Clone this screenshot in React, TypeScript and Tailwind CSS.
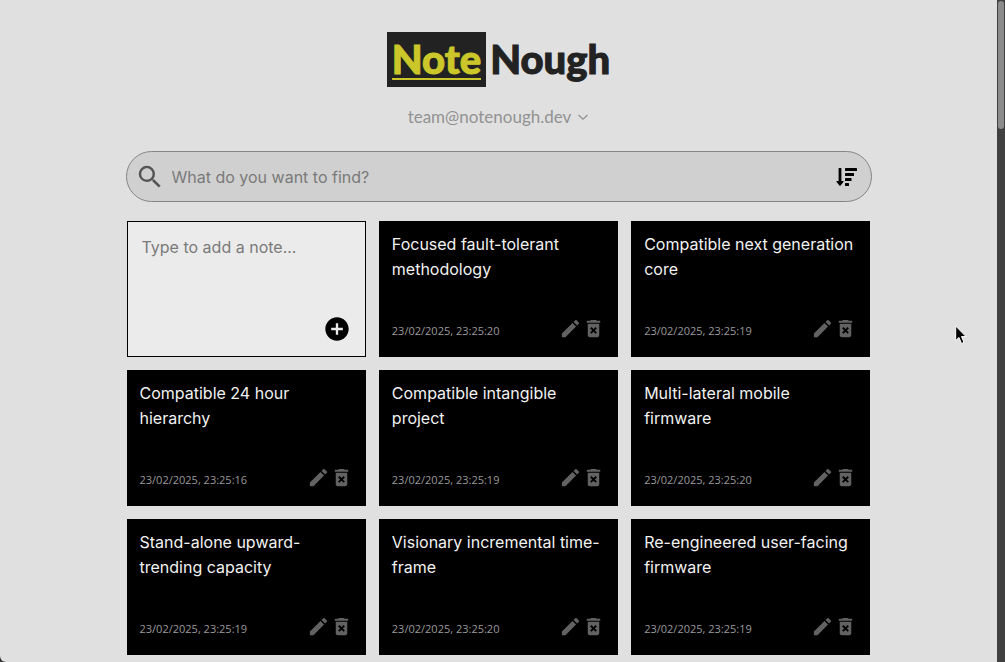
import { MdAddCircle, MdDeleteForever, MdEdit, MdSearch } from "react-icons/md";

type Note = { title: string; date: string };

const notes: Note[] = [
  { title: "Focused fault-tolerant methodology", date: "23/02/2025, 23:25:20" },
  { title: "Compatible next generation core", date: "23/02/2025, 23:25:19" },
  { title: "Compatible 24 hour hierarchy", date: "23/02/2025, 23:25:16" },
  { title: "Compatible intangible project", date: "23/02/2025, 23:25:19" },
  { title: "Multi-lateral mobile firmware", date: "23/02/2025, 23:25:20" },
  { title: "Stand-alone upward-trending capacity", date: "23/02/2025, 23:25:19" },
  { title: "Visionary incremental time-frame", date: "23/02/2025, 23:25:20" },
  { title: "Re-engineered user-facing firmware", date: "23/02/2025, 23:25:19" },
];

function SortIcon() {
  return (
    <svg width="22" height="20" viewBox="0 0 22 20" fill="currentColor" aria-hidden="true">
      <path d="M2.6 1.500Q2.600 1 3.100 1H4.900Q5.400 1 5.400 1.500V14H7.200Q8 14.200 7.400 15L4.600 18.500Q4 19.100 3.400 18.500L.6 15Q0 14.200 .8 14H2.600Z" />
      <rect x="9" y="1" width="12" height="3" rx=".6" />
      <rect x="9" y="6" width="9" height="3" rx=".6" />
      <rect x="9" y="11" width="6.500" height="3" rx=".6" />
      <rect x="9" y="16" width="4" height="3" rx=".6" />
    </svg>
  );
}

function NoteCard({ title, date }: Note) {
  return (
    <article className="flex h-[136px] flex-col justify-between bg-black pt-[11px] pr-[13px] pb-[17px] pl-[13px]">
      <h2 className="text-base leading-[25px] text-[#f2f2f2]">{title}</h2>
      <footer className="flex items-end justify-between">
        <time className="font-['Open_Sans',sans-serif] text-[11px] leading-[19px] text-[#999]">{date}</time>
        <div className="flex text-[#626262]">
          <button aria-label="Edit note"><MdEdit size={23} /></button>
          <button aria-label="Delete note"><MdDeleteForever size={23} /></button>
        </div>
      </footer>
    </article>
  );
}

export default function App() {
  return (
    <div className="flex min-h-screen bg-[#333] font-[Inter,sans-serif]">
      <main className="min-w-0 flex-1 rounded-bl-md bg-[#e0e0e0] pt-8">
        <div className="mx-auto w-3/4 max-w-[746px]">
          <header className="flex flex-col items-center">
            <h1 className="flex h-[55px] items-stretch font-[Lato,sans-serif] text-[40px] leading-[55px] font-black text-[#222] [-webkit-text-stroke:1px_currentColor]">
              <span className="bg-[#222] px-[5px] text-[#cbc72b]">
                <span className="block h-[48px] border-b-2 border-[#cbc72b]">Note</span>
              </span>
              <span className="pl-1">Nough</span>
            </h1>
            <button className="mt-[18px] flex h-6 items-center gap-1.5 font-[Lato,sans-serif] text-[17px] leading-6 text-[#929292]">
              team@notenough.dev
              <svg width="12" height="12" viewBox="0 0 12 12" fill="none" stroke="currentColor" strokeWidth="1.300" aria-hidden="true">
                <path d="M1.500 4L6 8.200L10.500 4" />
              </svg>
            </button>
          </header>

          <form className="mt-[22px] flex h-[51px] items-center rounded-full border border-[#858585] bg-[#d0d0d0] pr-[13px] pl-2">
            <MdSearch size={30} className="shrink-0 text-[#555]" />
            <input
              type="search"
              aria-label="Search notes"
              placeholder="What do you want to find?"
              className="ml-[7px] min-w-0 flex-1 bg-transparent text-base text-[#333] outline-none placeholder:text-[#7a7a7a]"
            />
            <button type="button" aria-label="Sort notes"><SortIcon /></button>
          </form>

          <section className="mt-[19px] grid grid-cols-3 gap-[13px] px-px">
            <form className="flex h-[136px] flex-col border border-black bg-[#ebebeb] pt-[13px] pr-3.5 pb-[13px] pl-3.5">
              <textarea
                aria-label="New note"
                placeholder="Type to add a note..."
                className="min-h-0 flex-1 resize-none bg-transparent text-base leading-[25px] text-[#222] outline-none placeholder:text-[#7a7a7a]"
              />
              <button type="button" aria-label="Add note" className="self-end">
                <MdAddCircle size={28} />
              </button>
            </form>
            {notes.map((note) => (
              <NoteCard key={note.title} {...note} />
            ))}
          </section>
        </div>
      </main>

      <div className="w-2 shrink-0 bg-[#404040] px-px pt-px" aria-hidden="true">
        <div className="h-32 rounded-full bg-[#8c8c8c]" />
      </div>

      <svg className="pointer-events-none absolute top-[325px] left-[955px]" width="13" height="20" viewBox="0 0 13 20" aria-hidden="true">
        <path d="M.7 1V15.500L4 12.500L6.500 18.500L9 17.400L6.500 11.600H11Z" fill="#000" stroke="#fff" strokeWidth="1" />
      </svg>
    </div>
  );
}
